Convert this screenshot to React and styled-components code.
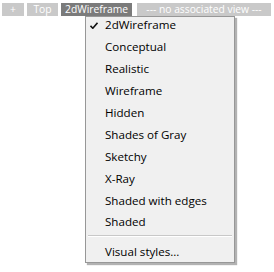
import styled, { createGlobalStyle } from "styled-components"

const Global = createGlobalStyle`
  body {
    margin: 0;
    background: #ffffff;
    font-family: "Open Sans", "Noto Sans", sans-serif;
  }
`

const Page = styled.div`
  position: relative;
  width: 274px;
  height: 272px;
`

const Toolbar = styled.div`
  display: flex;
  gap: 3px;
  padding: 3px 0 0 2px;
`

const ToolButton = styled.div`
  height: 13px;
  width: ${p => p.w}px;
  display: flex;
  align-items: center;
  justify-content: center;
  background: ${p => (p.active ? "#7b7b7b" : "#c9c9c9")};
  color: #ffffff;
  font-family: "Open Sans", sans-serif;
  font-size: 10.3px;
  line-height: 13px;
  white-space: nowrap;
  margin-right: ${p => p.mr || 0}px;
`

const Menu = styled.div`
  position: absolute;
  left: 85px;
  top: 16px;
  width: 148px;
  height: 245px;
  background: #f0f0f0;
  border: 1px solid #979797;
  box-shadow: 2px 2px 1px rgba(0, 0, 0, 0.3);
`

const List = styled.div`
  margin-top: -3px;
`

const Item = styled.div`
  position: relative;
  height: 21.9px;
  display: flex;
  align-items: center;
  padding-left: 19px;
  font-size: 11.6px;
  color: #000000;
`

const Check = styled.svg`
  position: absolute;
  left: 4px;
  top: 8px;
`

const Separator = styled.div`
  height: 1px;
  margin: 2px 2px 4px 2px;
  background: #c8c8c8;
  border-bottom: 1px solid #ffffff;
`

const styles = [
  "2dWireframe",
  "Conceptual",
  "Realistic",
  "Wireframe",
  "Hidden",
  "Shades of Gray",
  "Sketchy",
  "X-Ray",
  "Shaded with edges",
  "Shaded",
]

export default function App() {
  return (
    <Page>
      <Global />
      <Toolbar>
        <ToolButton w={22}>+</ToolButton>
        <ToolButton w={31}>Top</ToolButton>
        <ToolButton w={71} active mr={2}>2dWireframe</ToolButton>
        <ToolButton w={134}>--- no associated view ---</ToolButton>
      </Toolbar>
      <Menu>
        <List>
          {styles.map((s, i) => (
            <Item key={s}>
              {i === 0 && (
                <Check width="8" height="7" viewBox="0 0 8 7">
                  <path d="M0.5 3.8 L2.8 6.2 L7.5 0.8" fill="none" stroke="#111" strokeWidth="1.6" />
                </Check>
              )}
              {s}
            </Item>
          ))}
        </List>
        <Separator />
        <Item>Visual styles...</Item>
      </Menu>
    </Page>
  )
}
